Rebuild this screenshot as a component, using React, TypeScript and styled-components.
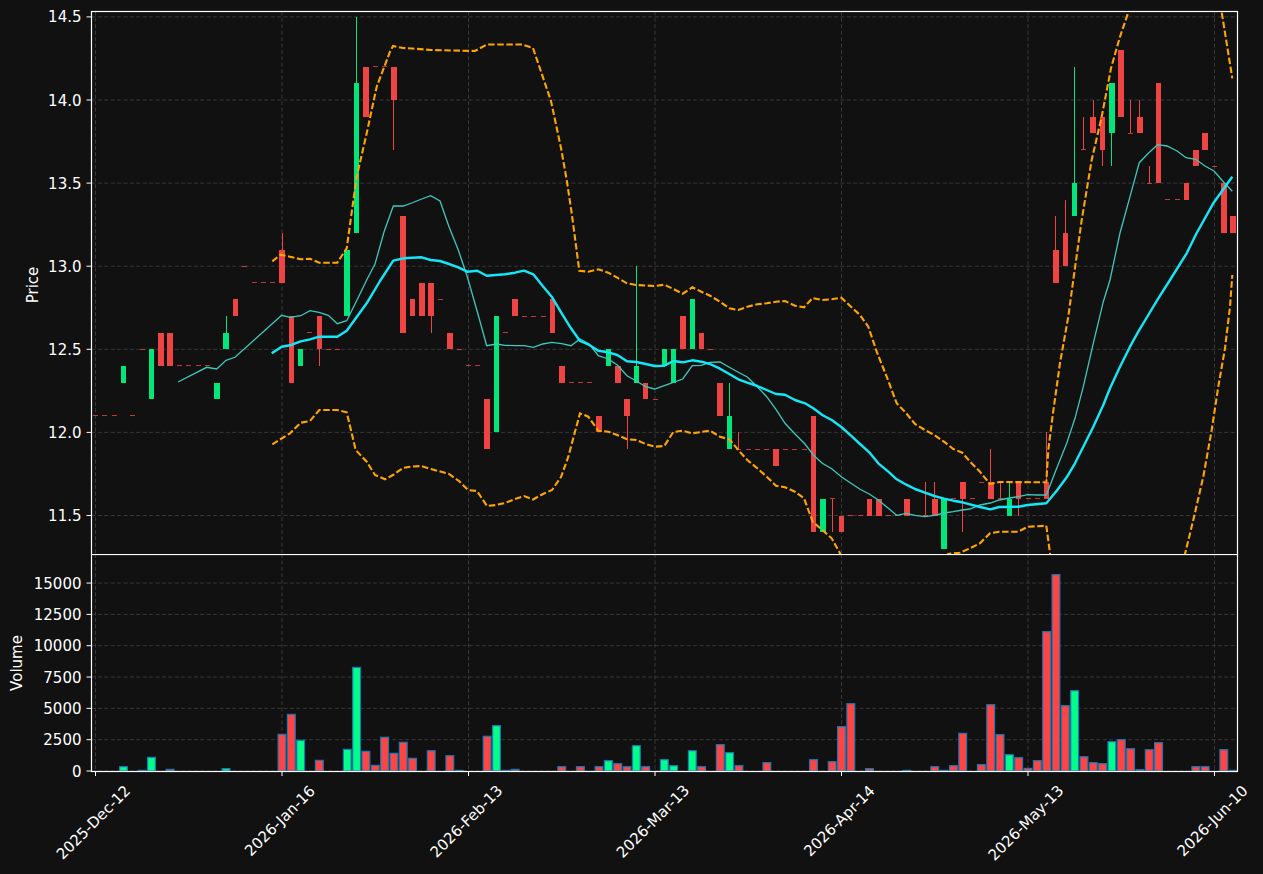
import { createGlobalStyle, styled } from 'styled-components';

const RED = '#ef4444';
const GREEN = '#00e67a';

const GlobalStyle = createGlobalStyle`
    html, body {
        margin: 0;
        padding: 0;
        background: #111111;
    }
`;

const Figure = styled.main`
    display: flex;
    flex-direction: column;
    width: 1263px;
    height: 874px;
    overflow: hidden;
    background: #111111;
    font-family: "DejaVu Sans", sans-serif;
`;

const Panel = styled.svg`
    display: block;
    flex: none;
    width: 1263px;
`;

const GridLine = styled.line`
    stroke: #383838;
    stroke-width: 1;
    stroke-dasharray: 4 2.4;
`;

const Spine = styled.rect`
    fill: none;
    stroke: #ffffff;
    stroke-width: 1.2;
`;

const Tick = styled.line`
    stroke: #ffffff;
    stroke-width: 1;
`;

const TickLabel = styled.text`
    fill: #ffffff;
    font-size: 15px;
    text-anchor: end;
    dominant-baseline: central;
`;

const DateLabel = styled.text`
    fill: #ffffff;
    font-size: 15px;
    text-anchor: middle;
    dominant-baseline: central;
`;

const AxisTitle = styled.text`
    fill: #ffffff;
    font-size: 15px;
    text-anchor: middle;
    dominant-baseline: central;
`;

const Body = styled.rect<{ $up: boolean }>`
    fill: ${p => (p.$up ? GREEN : RED)};
    shape-rendering: crispEdges;
`;

const Wick = styled.rect<{ $up: boolean }>`
    fill: ${p => (p.$up ? GREEN : RED)};
    shape-rendering: crispEdges;
`;

const Flat = styled.rect`
    fill: ${RED};
    opacity: 0.8;
    shape-rendering: crispEdges;
`;

const VolumeBar = styled.rect<{ $up: boolean }>`
    fill: ${p => (p.$up ? '#00ff88' : '#ff4444')};
    stroke: #1f77b4;
    stroke-width: 1.2;
`;

const BandLine = styled.polyline`
    fill: none;
    stroke: #ffa500;
    stroke-width: 2.1;
    stroke-dasharray: 6.5 2.6;
`;

const SlowAverage = styled.polyline`
    fill: none;
    stroke: #14e8f8;
    stroke-width: 2.4;
    stroke-linejoin: round;
`;

const FastAverage = styled.polyline`
    fill: none;
    stroke: #3fc8bd;
    stroke-width: 1.3;
`;

const X0 = 95.5;
const STEP = 9.325;
const LEFT = 91.5;
const RIGHT = 1237.5;
const TOP = 11.5;
const SPLIT = 554;
const BASE = 771;

const xAt = (i: number) => X0 + STEP * i;
const priceY = (p: number) => 515.5 - (p - 11.5) * 166.2;
const volumeY = (v: number) => BASE - v * 0.01253;

const PRICE_TICKS = ['11.5', '12.0', '12.5', '13.0', '13.5', '14.0', '14.5'];
const VOLUME_TICKS = [0, 2500, 5000, 7500, 10000, 12500, 15000];
const DATES = [
    { label: '2025-Dec-12', i: 0, cy: 822.5 },
    { label: '2026-Jan-16', i: 20, cy: 821 },
    { label: '2026-Feb-13', i: 40, cy: 821.5 },
    { label: '2026-Mar-13', i: 60, cy: 821.5 },
    { label: '2026-Apr-14', i: 80, cy: 821 },
    { label: '2026-May-13', i: 100, cy: 823 },
    { label: '2026-Jun-10', i: 120, cy: 821 },
];

// [body low, body high, green?, wick high, wick low]
type Candle = [number, number, 0 | 1, number?, number?];
const CANDLES: Candle[] = [
    [12.1, 12.1, 0], [12.1, 12.1, 0], [12.1, 12.1, 0], [12.3, 12.4, 1], [12.1, 12.1, 0],
    [12.5, 12.5, 0], [12.2, 12.5, 1], [12.4, 12.6, 0], [12.4, 12.6, 0], [12.4, 12.4, 0],
    [12.4, 12.4, 0], [12.4, 12.4, 0], [12.4, 12.4, 0], [12.2, 12.3, 1], [12.5, 12.6, 1, 12.7],
    [12.7, 12.8, 0], [13.0, 13.0, 0], [12.9, 12.9, 0], [12.9, 12.9, 0], [12.9, 12.9, 0],
    [12.9, 13.1, 0, 13.2], [12.3, 12.7, 0], [12.4, 12.5, 1], [12.6, 12.6, 0], [12.5, 12.7, 0, 12.7, 12.4],
    [12.5, 12.5, 0], [12.5, 12.5, 0], [12.7, 13.1, 1], [13.2, 14.1, 1, 14.5], [13.9, 14.2, 0],
    [14.2, 14.2, 0], [14.2, 14.2, 0], [14.0, 14.2, 0, 14.2, 13.7], [12.6, 13.3, 0], [12.7, 12.8, 0],
    [12.7, 12.9, 0], [12.7, 12.9, 0, 12.9, 12.6], [12.8, 12.8, 0], [12.5, 12.6, 0], [12.5, 12.5, 0],
    [12.4, 12.4, 0], [12.4, 12.4, 0], [11.9, 12.2, 0], [12.0, 12.7, 1], [12.6, 12.6, 0],
    [12.7, 12.8, 0], [12.7, 12.7, 0], [12.7, 12.7, 0], [12.7, 12.7, 0], [12.6, 12.8, 0],
    [12.3, 12.4, 0], [12.3, 12.3, 0], [12.3, 12.3, 0], [12.3, 12.3, 0], [12.0, 12.1, 0],
    [12.4, 12.5, 1], [12.3, 12.4, 0], [12.1, 12.2, 0, 12.2, 11.9], [12.3, 12.4, 1, 13.0], [12.2, 12.3, 0],
    [12.2, 12.2, 0], [12.4, 12.5, 1], [12.3, 12.5, 1], [12.5, 12.7, 0], [12.5, 12.8, 1],
    [12.5, 12.6, 0], [12.5, 12.5, 0], [12.1, 12.3, 0], [11.9, 12.1, 1, 12.3], [11.9, 11.9, 0, 12.0],
    [11.9, 11.9, 0], [11.9, 11.9, 0], [11.9, 11.9, 0], [11.8, 11.9, 0], [11.9, 11.9, 0],
    [11.9, 11.9, 0], [11.9, 11.9, 0], [11.4, 12.1, 0], [11.4, 11.6, 1], [11.6, 11.6, 0, 11.6, 11.4],
    [11.4, 11.5, 0], [11.5, 11.5, 0], [11.5, 11.5, 0], [11.5, 11.6, 0], [11.5, 11.6, 0],
    [11.5, 11.5, 0], [11.5, 11.5, 0], [11.5, 11.6, 0], [11.5, 11.5, 0], [11.5, 11.5, 0, 11.7],
    [11.5, 11.6, 0, 11.7], [11.3, 11.6, 1], [11.6, 11.6, 0], [11.6, 11.7, 0, 11.7, 11.4], [11.6, 11.6, 0],
    [11.7, 11.7, 0], [11.6, 11.7, 0, 11.9], [11.6, 11.6, 0, 11.7], [11.5, 11.6, 1, 11.7], [11.6, 11.7, 0, 11.7, 11.5],
    [11.6, 11.6, 0], [11.6, 11.6, 0], [11.6, 11.7, 0, 12.0], [12.9, 13.1, 0, 13.3], [13.0, 13.2, 0, 13.4],
    [13.3, 13.5, 1, 14.2], [13.7, 13.7, 0, 13.9], [13.8, 13.9, 0, 14.0], [13.7, 13.9, 0, 13.9, 13.6], [13.8, 14.1, 1, 14.1, 13.6],
    [13.9, 14.3, 0], [13.8, 13.8, 0, 14.0], [13.8, 13.9, 0, 14.0], [13.5, 13.5, 0, 13.6], [13.5, 14.1, 0],
    [13.4, 13.4, 0], [13.4, 13.4, 0], [13.4, 13.5, 0], [13.6, 13.7, 0], [13.7, 13.8, 0],
    [13.6, 13.6, 0], [13.2, 13.5, 0], [13.2, 13.3, 0],
];

// [index, volume, green?]
const VOLUMES: [number, number, 0 | 1][] = [
    [3, 345, 1], [5, 50, 1], [6, 1090, 1], [8, 130, 0], [14, 190, 1], [20, 2925, 0], [21, 4520, 0], [22, 2450, 1],
    [24, 850, 0], [27, 1730, 1], [28, 8270, 1], [29, 1570, 0], [30, 450, 0], [31, 2690, 0], [32, 1410, 0], [33, 2290, 0],
    [34, 1010, 0], [36, 1620, 0], [38, 1220, 0], [39, 50, 0], [42, 2770, 0], [43, 3620, 1], [44, 50, 0], [45, 130, 0],
    [50, 345, 0], [52, 345, 0], [54, 345, 0], [55, 825, 1], [56, 585, 0], [57, 345, 0], [58, 2020, 1], [59, 345, 0],
    [61, 905, 1], [62, 425, 1], [64, 1620, 1], [65, 345, 0], [67, 2100, 0], [68, 1460, 1], [69, 425, 0], [72, 665, 0],
    [77, 905, 0], [79, 745, 0], [80, 3540, 0], [81, 5370, 0], [83, 185, 0], [87, 50, 0], [90, 345, 0], [91, 50, 1],
    [92, 425, 0], [93, 3005, 0], [95, 505, 0], [96, 5290, 0], [97, 2900, 0], [98, 1300, 1], [99, 1060, 0], [100, 210, 0],
    [101, 825, 0], [102, 11120, 0], [103, 15670, 0], [104, 5210, 0], [105, 6410, 1], [106, 1140, 0], [107, 665, 0], [108, 585, 0],
    [109, 2340, 1], [110, 2500, 0], [111, 1780, 0], [112, 105, 0], [113, 1700, 0], [114, 2260, 0], [118, 345, 0], [119, 345, 0],
    [121, 1700, 0], [122, 50, 0],
];

const FAST = '178,382 206.7,367.3 216.7,369 226,360.3 235,357.3 281.7,315.3 290,317.3 300.7,315.7 310,310.7 319,312.3 328.3,315.3 337.3,323.7 346.7,320.7 356.5,301 366.7,280 375,264 384,232 393.3,206 403.3,206 413,202.5 421.7,199 430.7,195.7 440,201 449,226.7 458.3,250 467.3,276.7 477.3,311.7 486.7,345.7 496.7,344 505,345.3 515,345.7 524,345.7 533.3,347.3 542.7,344 551.7,342.3 561.7,343.7 571,345.7 580,339 589.3,344 598.3,355.7 608.3,359 617.3,365 627,375.7 636.3,381 645.7,386.7 654.7,389 664.3,385.7 673.3,382.3 682.7,379 692.3,365.7 701.3,365.3 710,362.3 720,362 729.3,367.3 738.3,372.3 747.3,377 757.3,386.7 766.7,396.7 776,409.3 785,423.3 795,434 805,444 813.3,455 822.3,463.3 831.7,468.7 841.3,476.7 851,483.3 860,489.3 869.3,494 878.3,500 888.3,508.3 896.7,515.3 906.3,513.3 915,515.3 925,516.7 934.3,515.3 944,513 953.3,511.7 962.3,510 970,509 980,505 990.3,503 999.3,500 1009.3,498 1018.3,496.7 1027.7,494.7 1037.3,495 1046.3,495 1056.7,468.3 1066.7,443.3 1075,418.3 1083.3,386.7 1093.3,343.3 1103.3,301.7 1110,280 1120,233 1130,196.7 1139.3,162.7 1148.3,153.3 1157.7,144.7 1167,146 1176.7,150.7 1186,157.7 1195.7,159.3 1205,166 1214,171 1223.3,181.7 1232.3,191.3';

const SLOW = '271.7,353.3 281.7,346.7 290,345.3 300.7,341.3 310,339.3 319.3,336.7 337.3,336.7 346.7,330.7 366.7,303.3 380,281 393.3,260.7 403.3,258.3 421.7,257.3 430.7,260 440,261 449,264 458.3,267.3 467.3,271.7 477.3,270.7 486.7,275.7 505,274.3 515,272.7 524,270.7 533.3,274.3 542.7,286 551.7,296.7 561.7,313.3 571,328.3 580,341 589.3,345 598.3,350.7 608.3,352.3 617.3,355 627,361.3 636.3,362 645.7,364 654.7,366 664.3,365.7 673.3,361 682.7,362.3 692.3,360.3 701.3,361.7 710,364 720,368.7 729.3,374 738.3,379.3 747.3,382.7 757.3,386 766.7,390 776,394 785,394.7 795,400 805,403.3 813.3,408.3 822.3,415 831.7,420 841.3,427 851,435.7 860,444 869.3,452.3 878.3,463.3 888.3,471.7 896.7,479.3 906.3,484.7 915,489 925,492.7 934.3,496 944,498.7 953.3,500.7 962.3,502.3 970,504.3 980,507 990.3,509.3 999.3,507 1018.3,506.7 1027.7,505 1046.3,503.3 1056.7,490.7 1066.7,477.3 1075,463.3 1083.3,446.7 1093.3,426.7 1103.3,405 1110,388.3 1120,366.7 1130,346.7 1138.3,331.7 1148.3,315 1158.3,298.3 1170,280 1186.7,253.3 1196.7,233 1213.3,203.3 1232.3,176.7';

const UPPER = '272.3,261.3 280.7,254.7 290,256.7 300.7,259.3 310,258.7 319.3,262.7 337.3,262.7 346.7,248.3 356.7,176.7 366.7,133.3 376.7,86.7 390,51.7 393,46 403,48 412,48.5 431,50 475,51 487,44.5 522,44.5 533,48 551,101 561,148 566.7,180 571.7,213 579.3,270.7 588.3,271.7 598.3,269.3 608.3,272.7 617.3,277.7 627,283.3 636.3,285 654.7,286 664.3,284.7 673.3,289 682.7,293.7 692.3,287.3 701.3,291.7 710,295.7 720,301.7 729.3,308.3 738.3,310 747.3,306.7 757.3,304.3 766.7,303.3 776,301.7 785,301 795,305.7 804,307.3 812.7,298 822.3,300 831.7,299.3 841.3,297.7 851,306.7 860,315 868.3,326.7 876.7,351.7 886.7,376.7 896.7,403.3 906.3,413.3 915,424 925,430 934.3,435 944,441.7 953.3,449 962.3,452.7 970,461.7 980,471.7 990,484 999.3,482 1046.3,482.3 1048.3,450 1053,413 1060,363 1068.3,316.7 1073.3,280 1081.7,220 1091.7,160 1101.7,116.7 1111,68.3 1120,36.7 1128.3,12.3 1140,-20 1200,-60 1218,-10 1221.7,12.3 1226.7,43.3 1232.3,78.3';

const LOWER = '272.3,444.3 290,433.3 300.7,422.7 310,421 319.3,410 337.3,410 346.7,412.3 355.7,450 366.7,461.7 375,475 385,479.3 393,475 403,468 412,466.5 421,466 431,469 449,474 459,481 468,490 477,491 487,506 496,505 505,503 515,499 524,496 533,499.5 543,494 552,490 561,477 568.3,456.7 580,413.3 588.3,416.7 598.3,430.7 608.3,431.7 617.3,435 627,439.3 636.3,440 645.7,444 654.7,446.7 664.3,446 673.3,432 682.7,430.7 692.3,433.3 710,430.7 720,436.7 729.3,439.3 738.3,450 747.3,460 757.3,468.3 766.7,476.7 776,485.7 785,487.3 795,491.7 804,498.3 812.7,521.7 822.3,530 831.7,538.3 840,553.3 850,575 900,600 948,554 960,552.7 970,548.3 980,543.3 990,533.3 999.3,531.7 1018.3,531.7 1027.7,526.7 1046.3,525.7 1050,553.3 1060,640 1120,680 1175,590 1185,554 1193.3,520 1203.3,476.7 1211.7,430 1218.3,386.7 1225,348.3 1230,306.7 1232.3,275';

function PriceCandle({ candle, i }: { candle: Candle; i: number }) {
    const [low, high, green, wickHigh = high, wickLow = low] = candle;
    const up = green === 1;
    const x = xAt(i);
    const top = priceY(high);
    const bottom = priceY(low);
    const wickTop = priceY(wickHigh);
    const wickBottom = priceY(wickLow);
    return (
        <g>
            {wickBottom - wickTop > bottom - top && (
                <Wick $up={up} x={x - 0.5} y={wickTop} width={1} height={wickBottom - wickTop} />
            )}
            {high === low
                ? <Flat x={x - 2.5} y={top - 0.5} width={5} height={1} />
                : <Body $up={up} x={x - 2.8} y={top} width={5.6} height={bottom - top} />}
        </g>
    );
}

function PriceChart() {
    return (
        <Panel viewBox={`0 0 1263 ${SPLIT}`} height={SPLIT}>
            <defs>
                <clipPath id="price-clip">
                    <rect x={LEFT} y={TOP} width={RIGHT - LEFT} height={SPLIT - TOP} />
                </clipPath>
            </defs>
            {PRICE_TICKS.map(t => <GridLine key={t} x1={LEFT} x2={RIGHT} y1={priceY(+t)} y2={priceY(+t)} />)}
            {DATES.map(d => <GridLine key={d.label} x1={xAt(d.i)} x2={xAt(d.i)} y1={TOP} y2={SPLIT} />)}
            <g clipPath="url(#price-clip)">
                {CANDLES.map((c, i) => <PriceCandle key={i} candle={c} i={i} />)}
                <FastAverage points={FAST} />
                <SlowAverage points={SLOW} />
                <BandLine points={UPPER} />
                <BandLine points={LOWER} />
            </g>
            {/* bottom edge falls outside the panel; the volume panel's top spine draws the divider */}
            <Spine x={LEFT} y={TOP} width={RIGHT - LEFT} height={SPLIT - TOP + 4} />
            {PRICE_TICKS.map(t => (
                <g key={t}>
                    <Tick x1={LEFT - 5} x2={LEFT} y1={priceY(+t)} y2={priceY(+t)} />
                    <TickLabel x={LEFT - 10} y={priceY(+t) + 0.5}>{t}</TickLabel>
                </g>
            ))}
            <AxisTitle transform="translate(33 285) rotate(-90)">Price</AxisTitle>
        </Panel>
    );
}

function VolumeChart() {
    return (
        <Panel viewBox={`0 ${SPLIT} 1263 ${874 - SPLIT}`} height={874 - SPLIT}>
            {VOLUME_TICKS.map(t => <GridLine key={t} x1={LEFT} x2={RIGHT} y1={volumeY(t)} y2={volumeY(t)} />)}
            {DATES.map(d => <GridLine key={d.label} x1={xAt(d.i)} x2={xAt(d.i)} y1={SPLIT} y2={BASE} />)}
            {VOLUMES.map(([i, v, green]) => (
                <VolumeBar key={i} $up={green === 1} x={xAt(i) - 3.9} y={volumeY(v)} width={7.8} height={BASE - volumeY(v)} />
            ))}
            <Spine x={LEFT} y={SPLIT + 0.5} width={RIGHT - LEFT} height={BASE - SPLIT} />
            {VOLUME_TICKS.map(t => (
                <g key={t}>
                    <Tick x1={LEFT - 5} x2={LEFT} y1={volumeY(t)} y2={volumeY(t)} />
                    <TickLabel x={LEFT - 10} y={volumeY(t) + 0.5}>{t}</TickLabel>
                </g>
            ))}
            <AxisTitle transform="translate(17 663) rotate(-90)">Volume</AxisTitle>
            {DATES.map(d => (
                <g key={d.label}>
                    <Tick x1={xAt(d.i)} x2={xAt(d.i)} y1={BASE} y2={BASE + 5} />
                    <DateLabel transform={`translate(${xAt(d.i) - 2} ${d.cy}) rotate(-45)`}>{d.label}</DateLabel>
                </g>
            ))}
        </Panel>
    );
}

export default function App() {
    return (
        <>
            <GlobalStyle />
            <Figure>
                <PriceChart />
                <VolumeChart />
            </Figure>
        </>
    );
}
